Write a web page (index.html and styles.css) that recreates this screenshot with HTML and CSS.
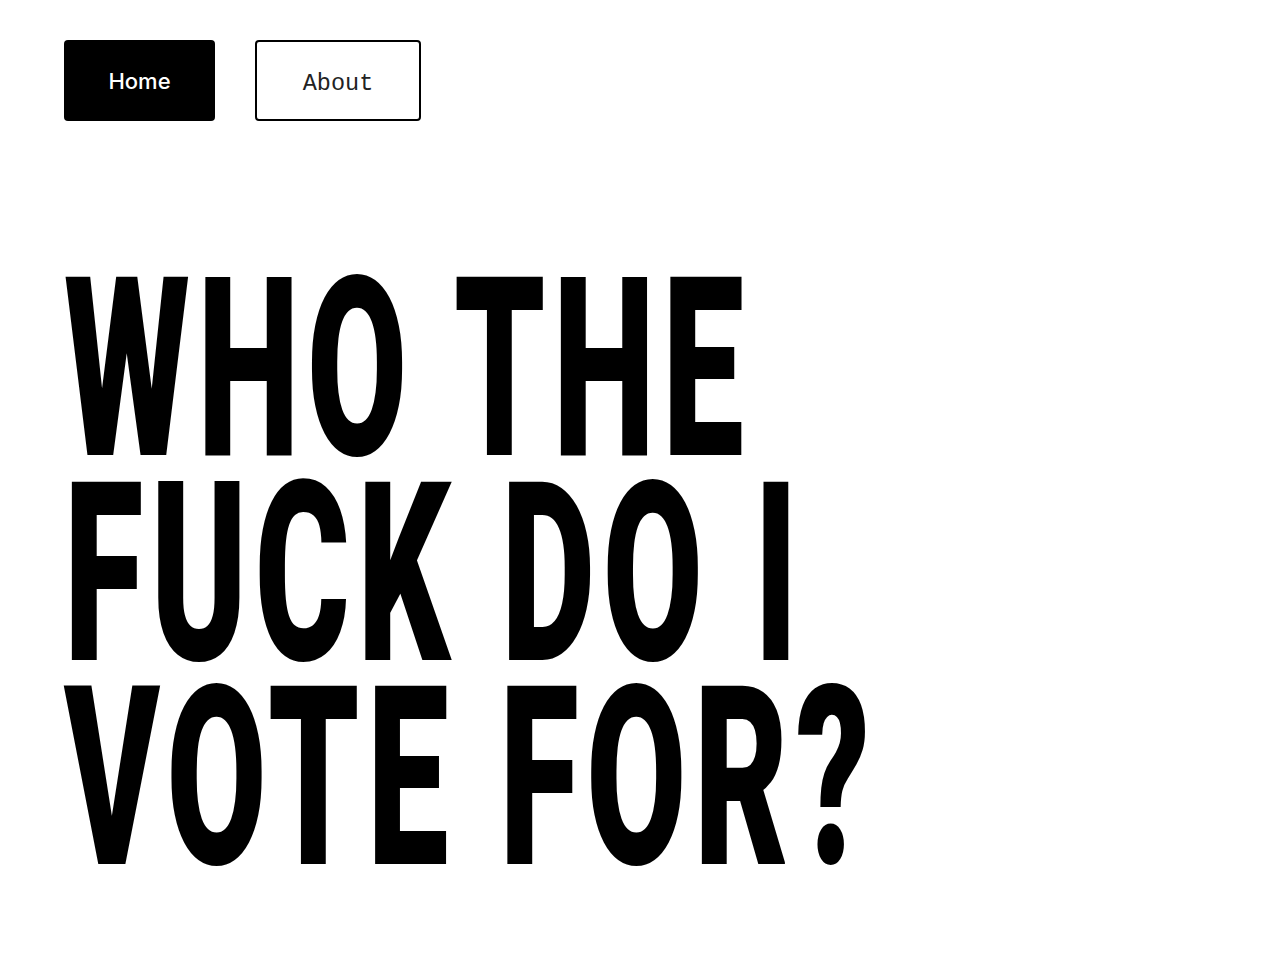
FILE: index.html
```html
<!DOCTYPE html>
<html lang="en">
<head>
<meta charset="utf-8">
<title>Who the fuck do I vote for?</title>
<link rel="stylesheet" href="styles.css">
</head>
<body>
<nav class="nav">
  <a class="btn btn-home" href="#">Home</a>
  <a class="btn btn-about" href="#">About</a>
</nav>
<h1 class="title">
  <span class="line line-1">WHO THE</span>
  <span class="line line-2">FUCK DO I</span>
  <span class="line line-3">VOTE FOR?</span>
</h1>
</body>
</html>
```
FILE: styles.css
```css
html, body {
  margin: 0;
  padding: 0;
  background: #fff;
  color: #000;
}
.nav {
  display: flex;
  gap: 40px;
  padding: 40px 64px 0;
}
.btn {
  display: flex;
  align-items: center;
  justify-content: center;
  height: 81px;
  box-sizing: border-box;
  text-decoration: none;
  border-radius: 4px;
}
.btn-home {
  width: 151px;
  background: #000;
  color: #fff;
  font-family: Inter, "Liberation Sans", sans-serif;
  font-size: 22px;
  font-weight: 500;
}
.btn-about {
  width: 166px;
  border: 2px solid #000;
  color: #222;
  padding-top: 5px;
  font-family: "Liberation Mono", monospace;
  font-size: 23.5px;
}
.title {
  margin: 147px 0 0 64px;
  font-family: Roboto, "Liberation Sans", sans-serif;
  font-weight: 900;
  font-size: 250px;
  line-height: 204.5px;
  letter-spacing: 13px;
}
.line {
  display: block;
  width: max-content;
  transform-origin: left center;
  transform: scaleX(0.58);
}
```
